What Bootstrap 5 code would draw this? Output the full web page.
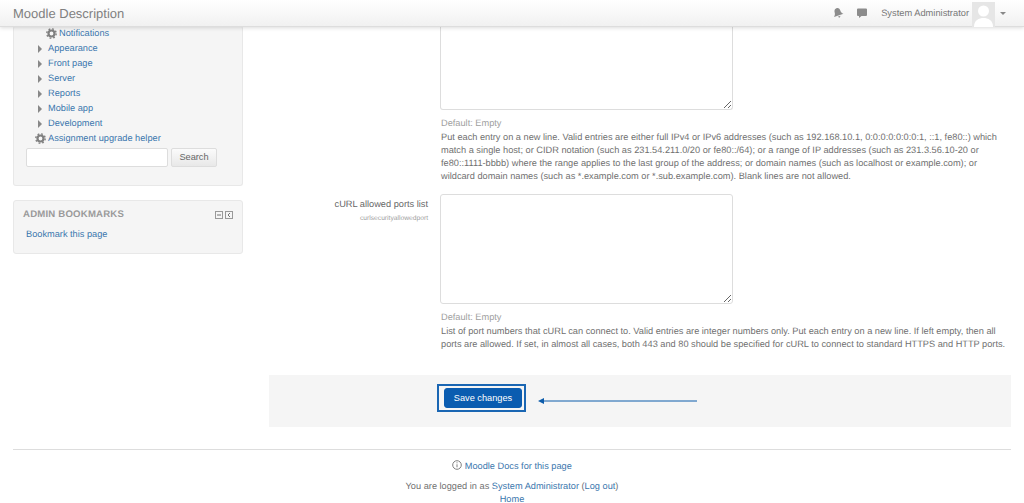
<!DOCTYPE html>
<html lang="en"><head><meta charset="utf-8"><title>Moodle</title>
<link rel="stylesheet" href="https://cdn.jsdelivr.net/npm/bootstrap@5.3.0/dist/css/bootstrap.min.css">
<style>
html,body{height:503px;overflow:hidden}
body{font-family:"Liberation Sans",Arial,sans-serif;font-size:9.23px;line-height:13px;color:#6f6f6f;background:#fff;text-rendering:geometricPrecision}
a{color:#3a76ad;text-decoration:none}
.topbar{height:27px;background:linear-gradient(#fff,#f1f1f1);border-bottom:1px solid #ddd;box-shadow:0 1px 4px rgba(0,0,0,.14);padding:0 13px;position:relative;z-index:2}
.brandname{font-size:13px;color:#808080}
.usertext{font-size:9.3px;color:#777}
.avatar{width:23px;height:25px;margin-top:2px;margin-left:3px;background:#e6e6e6;overflow:hidden}
.caretmark{border:3px solid transparent;border-top-color:#888;border-bottom:0;width:0;height:0;margin:0 5px}
.bellmark{margin-right:12px}
.chatmark{margin-right:13px}
.pagewrap{padding:0 13px;height:422px}
.leftcol{width:230px;flex:none}
.sideblock{background:#f5f5f5;border:1px solid #e8e8e8;border-radius:3px}
.blocktop{height:160px;border-top:0;padding:0 0 0 12px;margin-bottom:14px}
.treelist{list-style:none;margin:-1px 0 0;padding:0;line-height:15px}
.treelist li{height:15px;display:flex;align-items:center;white-space:nowrap}
.lvl1{padding-left:12px}.lvl2{padding-left:20px}.lvl0{padding-left:9px}
.gearmark{margin-right:2px}
.tri{width:0;height:0;border:4px solid transparent;border-left:4px solid #888;border-right:0;margin-right:6px}
.searchinput{width:142px;height:19px;border:1px solid #ddd;border-radius:2px;background:#fff;margin-top:2px}
.searchbtn{height:19px;width:46px;font-size:9.23px;line-height:17px;padding:0;margin:2px 0 0 3px;color:#666;background:linear-gradient(#fbfbfb,#e8e8e8);border:1px solid #ddd;border-radius:2px}
.blockbook{height:54px;padding:7px 9px 0 9px}
.booktitle{font-size:9.6px;font-weight:700;color:#9a9a9a;letter-spacing:.2px}
.bookctl{display:block}
.booklink{margin-top:7px;padding-left:3px}
.mainarea{margin-left:26px;width:742px;flex:none}
.fieldgrid{padding-left:172px;width:742px}
.bigarea{display:block;width:293px;height:110px;margin-left:-1px;border:1px solid #ddd;border-radius:3px;background:#fff;resize:both}
.firstarea{height:83px;border-top:0;border-radius:0 0 3px 3px}
.defaulttext{color:#a0a0a0;margin-top:7px}
.helptext{margin-top:1px;white-space:nowrap}
.fieldrow{margin-top:11px}
.labelcell{width:159px;text-align:right;flex:none;margin-left:-172px;margin-right:13px;padding-top:4px;color:#666}
.shortname{font-size:6.7px;line-height:9px;color:#a0a0a0;margin-top:3px}
.savezone{height:52px;background:#f5f5f5;margin-top:24px;padding:9px 0 0 168px}
.savebox{border:2px solid #1a66b3;padding:2px 5px;display:block;width:89px;height:28px}
.savebtn{display:block;width:78px;height:20px;padding:0;font-size:9.23px;line-height:18px;background:#0a5cb0;border:1px solid #0a5cb0;color:#fff;border-radius:3px}
.arrowmark{margin:13px 0 0 12px}
.footzone{border-top:1px solid #ddd;margin:0 13px;padding-top:10px;text-align:center;height:60px}
.footzone p{margin:0}
.footzone .docsline{margin-bottom:7px}
.infomark{vertical-align:-1px}
</style></head><body>
<header class="topbar d-flex align-items-center">
<span class="brandname me-auto">Moodle Description</span>
<svg width="12" height="12" viewBox="0 0 12 12" class="bellmark"><path transform="rotate(-18 6 6)" d="M6 1c2.200 0 3 2 3 3.500 0 2 1 3 2 4H1c1-1 2-2 2-4C3 3 3.800 1 6 1z M4.600 9.500h3L6 11z" fill="#8c8c8c"/></svg>
<svg width="12" height="12" viewBox="0 0 12 12" class="chatmark"><path d="M2 1.500h8a1 1 0 0 1 1 1v5.500a1 1 0 0 1-1 1H5.500L3 11V9H2a1 1 0 0 1-1-1V2.500a1 1 0 0 1 1-1z" fill="#8c8c8c"/></svg>
<span class="usertext">System Administrator</span>
<span class="avatar"><svg width="23" height="25" viewBox="0 0 23 25" class="d-block"><circle cx="11.500" cy="9" r="5.500" fill="#fff"/><path d="M2 25c0-7 5-9 9.500-9s9.500 2 9.500 9z" fill="#fff"/></svg></span>
<span class="caretmark"></span>
</header>
<div class="pagewrap d-flex">
<aside class="leftcol">
<section class="sideblock blocktop">
<ul class="treelist">
<li class="lvl2"><svg width="11" height="11" viewBox="0 0 11 11" class="gearmark"><circle cx="5.500" cy="5.500" r="3" fill="none" stroke="#808080" stroke-width="2.200"/><circle cx="5.500" cy="5.500" r="4.700" fill="none" stroke="#808080" stroke-width="1.400" stroke-dasharray="1.800 1.900"/></svg><a href="#">Notifications</a></li>
<li class="lvl1"><span class="tri"></span><a href="#">Appearance</a></li>
<li class="lvl1"><span class="tri"></span><a href="#">Front page</a></li>
<li class="lvl1"><span class="tri"></span><a href="#">Server</a></li>
<li class="lvl1"><span class="tri"></span><a href="#">Reports</a></li>
<li class="lvl1"><span class="tri"></span><a href="#">Mobile app</a></li>
<li class="lvl1"><span class="tri"></span><a href="#">Development</a></li>
<li class="lvl0"><svg width="11" height="11" viewBox="0 0 11 11" class="gearmark"><circle cx="5.500" cy="5.500" r="3" fill="none" stroke="#808080" stroke-width="2.200"/><circle cx="5.500" cy="5.500" r="4.700" fill="none" stroke="#808080" stroke-width="1.400" stroke-dasharray="1.800 1.900"/></svg><a href="#">Assignment upgrade helper</a></li>
</ul>
<div class="d-flex"><input class="searchinput" type="text" aria-label="Search"><button class="searchbtn" type="button">Search</button></div>
</section>
<section class="sideblock blockbook">
<div class="d-flex justify-content-between align-items-center"><span class="booktitle">ADMIN BOOKMARKS</span>
<svg width="18" height="8" viewBox="0 0 18 8" class="bookctl"><rect x=".5" y=".5" width="7" height="7" fill="none" stroke="#999"/><path d="M2 4h4" stroke="#777"/><rect x="10.500" y=".5" width="7" height="7" fill="none" stroke="#999"/><path d="M15 2L13 4l2 2" fill="none" stroke="#777"/></svg></div>
<div class="booklink"><a href="#">Bookmark this page</a></div>
</section>
</aside>
<main class="mainarea">
<div class="fieldgrid">
<textarea class="bigarea firstarea" aria-label="CIDR list"></textarea>
<div class="defaulttext">Default: Empty</div>
<div class="helptext">Put each entry on a new line. Valid entries are either full IPv4 or IPv6 addresses (such as 192.168.10.1, 0:0:0:0:0:0:0:1, ::1, fe80::) which<br>match a single host; or CIDR notation (such as 231.54.211.0/20 or fe80::/64); or a range of IP addresses (such as 231.3.56.10-20 or<br>fe80::1111-bbbb) where the range applies to the last group of the address; or domain names (such as localhost or example.com); or<br>wildcard domain names (such as *.example.com or *.sub.example.com). Blank lines are not allowed.</div>
<div class="d-flex fieldrow">
<div class="labelcell">cURL allowed ports list<div class="shortname">curlsecurityallowedport</div></div>
<textarea class="bigarea" aria-label="cURL allowed ports list"></textarea>
</div>
<div class="defaulttext">Default: Empty</div>
<div class="helptext">List of port numbers that cURL can connect to. Valid entries are integer numbers only. Put each entry on a new line. If left empty, then all<br>ports are allowed. If set, in almost all cases, both 443 and 80 should be specified for cURL to connect to standard HTTPS and HTTP ports.</div>
</div>
<div class="savezone d-flex align-items-start">
<span class="savebox"><button class="savebtn" type="button">Save changes</button></span>
<svg width="160" height="8" viewBox="0 0 160 8" class="arrowmark"><path d="M4 4h155" stroke="#0d5cab" stroke-width="1"/><path d="M0 4l6-3v6z" fill="#0d5cab"/></svg>
</div>
</main>
</div>
<footer class="footzone">
<p class="docsline"><svg width="10" height="10" viewBox="0 0 10 10" class="infomark"><circle cx="5" cy="5" r="4.300" fill="none" stroke="#808080"/><path d="M5 4.300v3M5 2.300v1" stroke="#808080"/></svg> <a href="#">Moodle Docs for this page</a></p>
<p>You are logged in as <a href="#">System Administrator</a> (<a href="#">Log out</a>)</p>
<p><a href="#">Home</a></p>
</footer>
</body></html>
